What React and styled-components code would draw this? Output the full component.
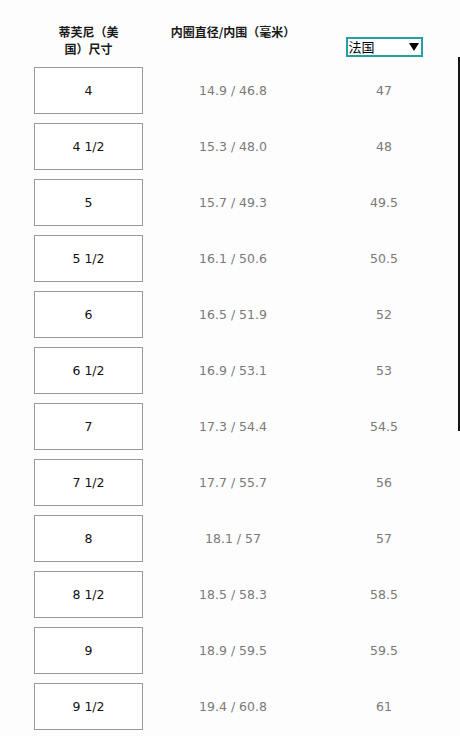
import React, { useState } from "react";
import styled, { createGlobalStyle } from "styled-components";

const GlobalStyle = createGlobalStyle`
  html, body {
    margin: 0;
    padding: 0;
    background: #fdfdfd;
  }
  body {
    font-family: "DejaVu Sans", Verdana, sans-serif;
  }
`;

const sizes = [
  { us: "4", inner: "14.9 / 46.8", fr: "47" },
  { us: "4 1/2", inner: "15.3 / 48.0", fr: "48" },
  { us: "5", inner: "15.7 / 49.3", fr: "49.5" },
  { us: "5 1/2", inner: "16.1 / 50.6", fr: "50.5" },
  { us: "6", inner: "16.5 / 51.9", fr: "52" },
  { us: "6 1/2", inner: "16.9 / 53.1", fr: "53" },
  { us: "7", inner: "17.3 / 54.4", fr: "54.5" },
  { us: "7 1/2", inner: "17.7 / 55.7", fr: "56" },
  { us: "8", inner: "18.1 / 57", fr: "57" },
  { us: "8 1/2", inner: "18.5 / 58.3", fr: "58.5" },
  { us: "9", inner: "18.9 / 59.5", fr: "59.5" },
  { us: "9 1/2", inner: "19.4 / 60.8", fr: "61" },
];

const Page = styled.div`
  position: relative;
  width: 460px;
  height: 736px;
  overflow: hidden;
  box-sizing: border-box;
  padding: 23px 0 0 34px;
`;

const ScrollThumb = styled.div`
  position: absolute;
  right: 0;
  top: 57px;
  width: 2.5px;
  height: 374px;
  background: #141414;
`;

const Table = styled.div`
  display: grid;
  grid-template-columns: 109px 180px 122px;
  row-gap: 9px;
`;

const HeadCell = styled.div`
  display: flex;
  justify-content: center;
  align-self: ${(props) => props.align || "start"};
  margin-bottom: 1px;
`;

const HeadText = styled.div`
  max-width: ${(props) => props.max || "none"};
  font-family: "Noto Sans CJK SC", sans-serif;
  font-size: 12px;
  font-weight: 700;
  line-height: 17px;
  color: #1a1a1a;
  text-align: center;
`;

const Select = styled.div`
  width: 77px;
  height: 20px;
  box-sizing: border-box;
  border: 2px solid #22a0a5;
  display: flex;
  align-items: center;
  justify-content: space-between;
  padding: 0 2px 0 1px;
  background: #fff;
  cursor: pointer;
`;

const SelectLabel = styled.span`
  font-family: "Noto Sans CJK SC", sans-serif;
  font-size: 13px;
  line-height: 16px;
  color: #000;
`;

const SizeBox = styled.div`
  height: 47px;
  box-sizing: border-box;
  border: 1px solid #9a9a9a;
  background: #fff;
  display: flex;
  align-items: center;
  justify-content: center;
  font-size: 12.5px;
  color: #111;
`;

const Value = styled.div`
  display: flex;
  align-items: center;
  justify-content: center;
  font-size: 12.5px;
  color: #7a7a7a;
`;

export default function App() {
  const [country] = useState("法国");

  return (
    <Page>
      <GlobalStyle />
      <Table>
        <HeadCell>
          <HeadText max="64px">蒂芙尼（美国）尺寸</HeadText>
        </HeadCell>
        <HeadCell>
          <HeadText>内圈直径/内围（毫米）</HeadText>
        </HeadCell>
        <HeadCell align="end">
          <Select>
            <SelectLabel>{country}</SelectLabel>
            <svg width="10" height="8" viewBox="0 0 10 8">
              <path d="M0 0 H10 L5 8 Z" fill="#000" />
            </svg>
          </Select>
        </HeadCell>
        {sizes.map((row) => (
          <React.Fragment key={row.us}>
            <SizeBox>{row.us}</SizeBox>
            <Value>{row.inner}</Value>
            <Value>{row.fr}</Value>
          </React.Fragment>
        ))}
      </Table>
      <ScrollThumb />
    </Page>
  );
}
